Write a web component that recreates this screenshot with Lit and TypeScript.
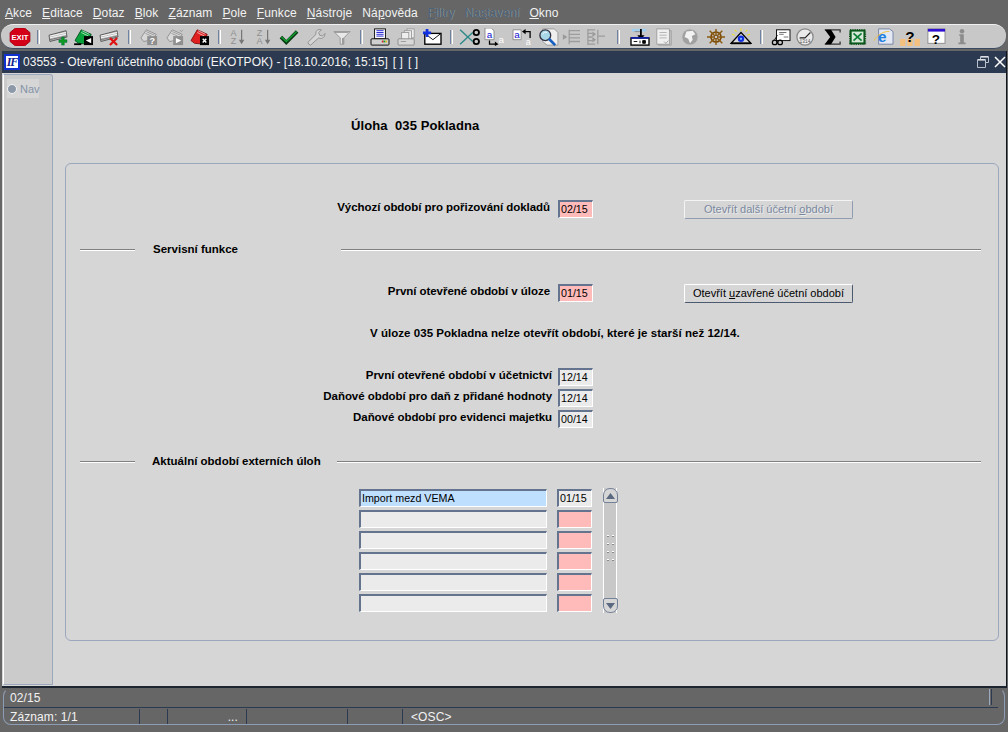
import { LitElement, html, css, svg } from "lit";
import { customElement } from "lit/decorators.js";

const stack = svg`<polygon points="2,8 21,3 22,10 3,15" fill="#b8b8b8" stroke="#555"/><path d="M3 9 21 5M3 11 21 7" stroke="#fff" fill="none"/><path d="M3 13 21 9" stroke="#777" fill="none"/>`;
const card = (c: string, d: string) => svg`<polygon points="2,14 9,2 20,7 16,18 6,17" fill="${c}" stroke="${d}"/><path d="M10 3 18 7M9 5 17 9" stroke="#fff" opacity=".7"/>`;
const gcard = svg`<polygon points="3,11 9,2 20,7 16,13 6,15" fill="#d8d8d8" stroke="#8c8c8c"/><path d="M9 4 18 8M8 6 15 9" stroke="#999"/>`;
const blackBox = (s: unknown) => svg`<rect x="12" y="9" width="10" height="10" fill="#000"/>${s}`;
const grayBox = (s: unknown) => svg`<rect x="10" y="9" width="11" height="10" fill="#8f8f8f"/>${s}`;
const fam = "Liberation Sans";

type Ic = { c: number; g?: unknown };
const items: Ic[] = [
  { c: 20, g: svg`<polygon points="7,0 17,0 23,5 23,15 17,20 7,20 1,15 1,5" fill="#d40018" stroke="#a00010"/><text x="12" y="13.5" text-anchor="middle" font-family="${fam}" font-weight="700" font-size="8.5" fill="#fff">EXIT</text>` },
  { c: 38.5 },
  { c: 58, g: svg`${stack}<path d="M16 10h3v3h3v3h-3v3h-3v-3h-3v-3h3z" fill="#0f9a22" stroke="#064" stroke-width=".5"/>` },
  { c: 84, g: svg`${card("#08a038", "#045020")}${blackBox(svg`<polygon points="14,14 20,11 20,17" fill="#fff"/>`)}<path d="M1 18h8" stroke="#000" stroke-width="2"/>` },
  { c: 109, g: svg`${stack}<path d="M13 11 21 19M21 11 13 19" stroke="#e01010" stroke-width="2.4"/>` },
  { c: 129 },
  { c: 149, g: svg`${gcard}${grayBox(svg`<text x="15.5" y="18" text-anchor="middle" font-family="${fam}" font-weight="700" font-size="10" fill="#fff">?</text>`)}` },
  { c: 175, g: svg`${gcard}${grayBox(svg`<polygon points="13,11 19,14 13,17" fill="#fff"/>`)}<path d="M17 2l2 2 2-2" stroke="#999" fill="none"/>` },
  { c: 200, g: svg`${card("#e02020", "#801010")}${blackBox(svg`<path d="M15 12 19 16M19 12 15 16" stroke="#fff" stroke-width="1.6"/>`)}` },
  { c: 219 },
  { c: 238, g: svg`<text x="7" y="9" text-anchor="middle" font-family="${fam}" font-size="10" fill="#8f8f8f">A</text><text x="7" y="18" text-anchor="middle" font-family="${fam}" font-size="10" fill="#8f8f8f">Z</text><path d="M16 2v14" stroke="#777" stroke-width="1.4"/><polygon points="13,13 19,13 16,18" fill="#777"/>` },
  { c: 264, g: svg`<text x="7" y="9" text-anchor="middle" font-family="${fam}" font-size="10" fill="#8f8f8f">Z</text><text x="7" y="18" text-anchor="middle" font-family="${fam}" font-size="10" fill="#8f8f8f">A</text><path d="M16 2v14" stroke="#777" stroke-width="1.4"/><polygon points="13,13 19,13 16,18" fill="#777"/>` },
  { c: 289, g: svg`<path d="M3 10 9 16 21 4" fill="none" stroke="#0a3a14" stroke-width="4"/><path d="M3.5 10 9 15 20.5 4" fill="none" stroke="#12a030" stroke-width="1.6"/>` },
  { c: 316, g: svg`<path d="M4 18 3 16 12 7C11 3 14 1 18 2L15 5 16 8 19 9 22 6C22 10 19 13 15 11L6 19Z" fill="#d6d6d6" stroke="#8c8c8c"/>` },
  { c: 342, g: svg`<polygon points="3,4 21,4 14,11 14,18 10,18 10,11" fill="#e8e8e8" stroke="#909090"/><path d="M4 5h15" stroke="#9a9a9a"/><path d="M13 11v7" stroke="#9a9a9a" stroke-width="2"/>` },
  { c: 361 },
  { c: 380, g: svg`<rect x="6" y="1" width="12" height="11" fill="#fff" stroke="#000"/><path d="M8 3h8M8 5h8M8 7h8M8 9h8" stroke="#1818d0"/><rect x="2" y="12" width="20" height="7" rx="1" fill="#d0d0d0" stroke="#000"/><path d="M14 15h2" stroke="#e02020" stroke-width="2"/><path d="M16 15h2" stroke="#10a030" stroke-width="2"/><path d="M18 15h2" stroke="#e0c020" stroke-width="2"/>` },
  { c: 407, g: svg`<rect x="12" y="1" width="8" height="10" fill="#eee" stroke="#999"/><rect x="9" y="3" width="8" height="10" fill="#eee" stroke="#999"/><rect x="6" y="5" width="8" height="8" fill="#eee" stroke="#999"/><rect x="2" y="12" width="18" height="7" rx="1" fill="#d8d8d8" stroke="#8a8a8a"/><path d="M5 15h6" stroke="#999"/>` },
  { c: 432, g: svg`<rect x="4" y="6" width="18" height="12" fill="#fff" stroke="#000" stroke-width="1.5"/><path d="M4 6 13 13 22 6" fill="none" stroke="#000"/><path d="M2 4h3V1h3v3h3v3H8v3H5V7H2z" fill="#1030e0"/>` },
  { c: 451 },
  { c: 470, g: svg`<path d="M1 2 15 15" stroke="#2e8a8a" stroke-width="1.6"/><path d="M1 18 15 5" stroke="#2e8a8a" stroke-width="1.6"/><circle cx="19" cy="5" r="3" fill="none" stroke="#000" stroke-width="2"/><circle cx="19" cy="15" r="3" fill="none" stroke="#000" stroke-width="2"/>` },
  { c: 494, g: svg`<polygon points="2,0 9,0 12,3 12,13 2,13" fill="#fff" stroke="#888"/><text x="7" y="11" text-anchor="middle" font-family="${fam}" font-size="11" fill="#1010d0">a</text><path d="M7 14v4h7" fill="none" stroke="#000" stroke-width="1.4"/><polygon points="13,15 17,18 13,20" fill="#000"/><text x="20" y="17" text-anchor="middle" font-family="${fam}" font-size="11" fill="#fff">a</text>` },
  { c: 522, g: svg`<polygon points="2,2 11,2 11,13 2,13" fill="#fff" stroke="#888"/><text x="6.5" y="11" text-anchor="middle" font-family="${fam}" font-size="11" fill="#1010d0">a</text><path d="M21 11V4h-6" fill="none" stroke="#000" stroke-width="1.4"/><polygon points="16,1 12,4 16,7" fill="#000"/><text x="19" y="19" text-anchor="middle" font-family="${fam}" font-size="10" fill="#fff">a</text>` },
  { c: 548, g: svg`<polygon points="6,1 19,1 23,5 23,19 11,19 6,15" fill="#efefef" stroke="#999"/><circle cx="9" cy="8" r="6" fill="#a8d8e8" stroke="#334" stroke-width="1.5"/><path d="M6 7C7 5 9 4 11 5" stroke="#fff" fill="none"/><path d="M13 12 20 19" stroke="#1860c0" stroke-width="3"/>` },
  { c: 571, g: svg`<polygon points="3,7 8,10 3,13" fill="#999"/><path d="M10 2v16M10 3h12M10 7h12M10 11h12M10 15h12" stroke="#9c9c9c" stroke-width="1.4"/>` },
  { c: 596, g: svg`<path d="M3 1v18M3 2h8M3 6h5M3 10h5M3 14h5M3 18h8" stroke="#9c9c9c" stroke-width="1.4"/><polygon points="8,4 12,7 8,10" fill="#999"/><polygon points="8,10 12,13 8,16" fill="#999"/><path d="M14 2v16M14 9h8" stroke="#9c9c9c" stroke-width="1.4"/>` },
  { c: 618.5 },
  { c: 640, g: svg`<rect x="3" y="1" width="16" height="3" fill="#a0d0f0"/><path d="M6 4h6" stroke="#888"/><path d="M13 1v9" stroke="#000" stroke-width="2"/><polygon points="9,8 17,8 13,13" fill="#000"/><rect x="2" y="11" width="20" height="8" fill="#fff" stroke="#000" stroke-width="1.5"/><rect x="2" y="10" width="20" height="2" fill="#1020a0"/><path d="M5 15h4M12 14v3M15 14h3v3h-3z" stroke="#000"/>` },
  { c: 664, g: svg`<rect x="4" y="1" width="14" height="17" fill="#efefef" stroke="#9c9c9c"/><path d="M18 3h2v16H6v-1" stroke="#9c9c9c" fill="none"/><path d="M7 5h8M7 8h8M7 11h8" stroke="#b0b0b0"/><path d="M12 15l2 2 3-3" stroke="#999" fill="none"/>` },
  { c: 690, g: svg`<circle cx="12" cy="10" r="9" fill="#a0a0a0" stroke="#c4c4c4"/><path d="M8 4 15 3 18 7 14 9 15 13 12 17 10 12 6 10Z" fill="#f2f2f2"/>` },
  { c: 716, g: svg`<circle cx="12" cy="10" r="5.5" fill="none" stroke="#7a4a08" stroke-width="2"/><path d="M12 1v18M2 10h20M5 3l14 14M19 3 5 17" stroke="#8a5a10" stroke-width="1.6"/><circle cx="12" cy="10" r="2" fill="#c8c8c8" stroke="#7a4a08"/>` },
  { c: 741, g: svg`<path d="M12 0v3M5 2l2 2M19 2l-2 2M2 7l3 1M22 7l-3 1" stroke="#f0e020" stroke-width="1.2"/><polygon points="12,5 23,17 1,17" fill="#d8d8d8" stroke="#000" stroke-width="1.4"/><path d="M1 17h22" stroke="#000" stroke-width="2"/><circle cx="12" cy="12" r="3.6" fill="#1030e0"/><circle cx="12" cy="12" r="1.2" fill="#80c0ff"/>` },
  { c: 761 },
  { c: 781, g: svg`<rect x="7" y="2" width="15" height="12" fill="#fff" stroke="#000"/><path d="M10 5h8M10 7h5M15 10h5" stroke="#666"/><circle cx="5" cy="16" r="2.6" fill="none" stroke="#000" stroke-width="1.4"/><circle cx="11" cy="16" r="2.6" fill="none" stroke="#000" stroke-width="1.4"/><path d="M7 16h2M5 13l3-5" stroke="#000"/>` },
  { c: 805, g: svg`<circle cx="12" cy="10" r="9" fill="#eaeaea" stroke="#888" stroke-width="1.4"/><path d="M6 11H12L18 5" stroke="#222" stroke-width="1.2" fill="none"/><text x="12" y="16.5" text-anchor="middle" font-family="Liberation Mono" font-size="5" fill="#555">1314</text>` },
  { c: 832, g: svg`<path d="M4 2H21V5M4 18H21V15" fill="none" stroke="#333" stroke-width="1.4"/><polygon points="4,2 11,2 16,10 11,18 4,18 10,10" fill="#000"/>` },
  { c: 857.5, g: svg`<rect x="3" y="2" width="17" height="16" fill="#0c6020" stroke="#0a4a18" stroke-dasharray="1 1" stroke-width="2"/><rect x="5" y="4" width="13" height="12" fill="#d8e8d8"/><path d="M7 6 16 14M16 6 7 14" stroke="#108038" stroke-width="2"/>` },
  { c: 884, g: svg`<polygon points="6,1 18,1 22,4 22,18 6,18" fill="#e4e8f4" stroke="#7080a0"/><text x="10" y="15" text-anchor="middle" font-family="${fam}" font-weight="700" font-size="17" fill="#2080e0">e</text><path d="M1 14C4 7 14 3 18 4" stroke="#f0c030" fill="none"/>` },
  { c: 910, g: svg`<rect x="1" y="12" width="6" height="8" fill="#f4c080"/><rect x="17" y="12" width="6" height="8" fill="#f4c080"/><rect x="9" y="12" width="6" height="8" fill="#f4c080"/><text x="12" y="15" text-anchor="middle" font-family="${fam}" font-weight="700" font-size="17" fill="#000">?</text>` },
  { c: 936, g: svg`<rect x="3" y="1" width="19" height="16" fill="#fff" stroke="#888"/><rect x="3" y="1" width="19" height="3" fill="#3010d0"/><text x="12" y="18" text-anchor="middle" font-family="${fam}" font-weight="700" font-size="15" fill="#000">?</text>` },
  { c: 962, g: svg`<circle cx="12" cy="3.5" r="2.5" fill="#8c8c8c"/><path d="M9 7h5v9h2v2H8v-2h2V9H9z" fill="#8c8c8c"/>` },
];

const menus: [string, string, string, boolean?][] = [
  ["", "A", "kce"], ["", "E", "ditace"], ["", "D", "otaz"], ["", "B", "lok"], ["", "Z", "áznam"], ["", "P", "ole"],
  ["", "F", "unkce"], ["", "N", "ástroje"], ["Ná", "p", "ověda"], ["", "F", "iltry", true], ["Na", "s", "tavení", true], ["", "O", "kno"],
];

@customElement("app-root")
export class AppRoot extends LitElement {
  static styles = css`
    :host { display: flex; flex-direction: column; width: 1008px; height: 732px; background: #666; overflow: hidden;
      font: 12px "Liberation Sans", Arial, sans-serif; color: #000; }
    .menu { height: 24px; display: flex; align-items: center; gap: 10px; padding: 2px 0 0 5px; box-sizing: border-box; color: #f2f2f2; flex: none; letter-spacing: .1px; }
    .menu .off { color: #4f6376; text-shadow: 1px 0 0 #858f95; }
    .menu u { text-underline-offset: 1px; }
    .toolbar { height: 25px; flex: none; box-sizing: border-box; margin: 0 2px 0 1px; background: #c8c8c8; border-top: 1px solid #f0f0f0; border-bottom: 1px solid #3a4a60; border-radius: 12px; display: flex; align-items: center; }
    .toolbar svg { flex: none; display: block; }
    .sep { flex: none; width: 3px; height: 14px; box-sizing: border-box; border-left: 1px solid #6f82a4; border-right: 1px solid #fff; }
    .window { margin: 2px 1px 0 2px; height: 637px; flex: none; display: flex; flex-direction: column; background: #d6d6d6; border-bottom: 2px solid #1c2430; border-right: 1px solid #10161f; box-sizing: border-box; }
    .title { height: 22px; flex: none; background: #2b3a50; color: #f4f4f4; display: flex; align-items: center; padding: 0 0 0 2px; letter-spacing: .03px; gap: 3px; white-space: pre; }
    .title .t { margin-left: 5px; }
    .logo { width: 16px; height: 16px; background: #fff; box-sizing: border-box; border: 2px solid #1030d0; color: #102090; display: flex; align-items: center; justify-content: center; font: italic 700 12px "Liberation Serif", serif; letter-spacing: -1px; flex: none; }
    .title .grow { flex: 1; }
    .wbtns { display: flex; gap: 5px; }
    .body { flex: 1; display: flex; min-height: 0; }
    .nav { width: 50px; flex: none; box-sizing: border-box; margin: 1px 0 1px 1px; background: #cbcbcb; border: 1px solid #9aa7bd; border-left-color: #fff; border-top-right-radius: 3px; padding: 4px 0 0 3px; }
    .navtab { display: flex; align-items: center; gap: 3px; height: 19px; width: 32px; background: #d6d6d6; color: #8593a8; font-size: 11px; }
    .radio { width: 10px; height: 10px; border-radius: 50%; background: #8d98a8; border: 1px solid #f4f4f4; box-sizing: border-box; flex: none; }
    .content { flex: 1; padding: 0 0 0 12px; min-width: 0; }
    .heading { font-weight: 700; font-size: 13px; height: 90px; padding: 45px 0 0 286px; box-sizing: border-box; white-space: pre; letter-spacing: .1px; }
    .panel { width: 934px; height: 478px; box-sizing: border-box; border: 1px solid #9aa7bd; border-radius: 6px; display: flex; flex-direction: column; }
    .row { display: grid; grid-template-columns: 486px 35px 79px 169px; column-gap: 6px; height: 18px; align-items: center; flex: none; }
    .row > :nth-child(3) { grid-column: 4; }
    .lbl { font-weight: 700; font-size: 11.5px; text-align: right; white-space: nowrap; letter-spacing: -.05px; margin-top: -5px; }
    .lbl.in { padding-right: 2px; }
    .r1 { margin-top: 35px; } .r2 { margin-top: 25px; } .r4 { margin-top: 26px; } .r5 { margin-top: 3px; }
    .note { font-weight: 700; font-size: 11.5px; margin-top: 23px; height: 18px; padding-left: 304px; letter-spacing: .04px; line-height: 18px; flex: none; }
    .fld { box-sizing: border-box; height: 18px; border: 1px solid; border-width: 2px 1px 1px 2px; border-color: #64748f #fff #fff #64748f; background: #ebebeb; font-size: 10.7px; line-height: 15px; padding-left: 1px; white-space: nowrap; overflow: hidden; }
    .pink { background: #ffbaba; }
    .blue { background: #bfdfff; }
    .btn { box-sizing: border-box; height: 19px; background: #d6d6d6; border: 1px solid; border-color: #fff #4c5a70 #4c5a70 #fff; border-radius: 2px; text-align: center; font-size: 11px; line-height: 17px; white-space: nowrap; margin-top: 1px; }
    .btn.dis { color: #7a889f; text-shadow: 1px 1px 0 #ececec; border-color: #f4f4f4 #8f9cb2 #8f9cb2 #f4f4f4; }
    .divider { display: grid; align-items: center; height: 16px; padding: 0 17px 0 14px; font-weight: 700; font-size: 11.5px; flex: none; letter-spacing: 0; }
    .divider i { height: 2px; background: linear-gradient(#808080 50%, #fff 50%); display: block; }
    .divider span { white-space: nowrap; margin-top: -2px; }
    .d1 { margin-top: 25px; grid-template-columns: 55px 206px 1fr; }
    .d1 span { padding-left: 18px; }
    .d2 { margin-top: 26px; grid-template-columns: 55px 202px 1fr; }
    .d2 span { padding-left: 17px; }
    .table { margin-top: 19px; display: grid; grid-template-columns: 188px 35px 15px; column-gap: 10px; padding-left: 293px; grid-auto-rows: 18px; row-gap: 3px; }
    .table .fld { line-height: 15px; }
    .scroll { grid-column: 3; grid-row: 1 / span 6; height: 125px; margin: -1px 0 0 1px; box-sizing: border-box; border-left: 1px solid #fff; border-right: 1px solid #fff; background: #c8c8c8; display: flex; flex-direction: column; justify-content: space-between; align-items: center; }
    .sbtn { width: 15px; height: 15px; box-sizing: border-box; margin: 0 -1px; background: #d6d6d6; border: 1px solid #748299; display: flex; align-items: center; justify-content: center; flex: none; }
    .sbtn.up { border-radius: 7px 7px 2px 2px; }
    .sbtn.dn { border-radius: 2px 2px 7px 7px; }
    .grip { display: grid; grid-template-columns: 2px 2px; gap: 6px 3px; margin-top: -5px; }
    .grip b { width: 2px; height: 1px; background: #fff; border-bottom: 1px solid #8a8a8a; box-sizing: content-box; }
    .status { flex: none; margin: 0 3px 0 3px; height: 37px; box-sizing: border-box; border: 1px solid #8f9db4; border-top-color: #666; border-radius: 8px; color: #f2f2f2; display: flex; flex-direction: column; font-size: 12px; letter-spacing: .1px; }
    .st1 { height: 19px; box-sizing: border-box; margin-right: 6px; border-bottom: 1px solid #2b3a50; padding-left: 6px; line-height: 18px; display: flex; justify-content: space-between; flex: none; }
    .st1 i { width: 3px; height: 16px; margin-right: 6px; border-left: 1px solid #9aa7bd; border-right: 1px solid #2b3a50; box-sizing: border-box; }
    .st2 { flex: 1; display: grid; grid-template-columns: 136px 28px 79px 101px 55px 1fr; }
    .st2 > div { height: 15px; margin-top: 1px; box-sizing: border-box; border-right: 1px solid #2b3a50; line-height: 17px; padding-left: 6px; white-space: nowrap; }
    .st2 > div:last-child { border-right: 0; padding-left: 8px; }
    .st2 .dots { text-align: right; padding-right: 8px; }
  `;

  private renderToolbar() {
    let right = 0;
    return items.map((it) => {
      const w = it.g ? 22 : 3;
      const ml = it.c - w / 2 - right - 1;
      right = it.c - 1 + w / 2;
      return it.g
        ? html`<svg width="22" height="18" viewBox="0 0 24 20" style="margin-left:${ml}px">${it.g}</svg>`
        : html`<span class="sep" style="margin-left:${ml}px"></span>`;
    });
  }

  render() {
    return html`
      <div class="menu">
        ${menus.map(([a, u, b, off]) => html`<span class=${off ? "off" : ""}>${a}<u>${u}</u>${b}</span>`)}
      </div>
      <div class="toolbar">${this.renderToolbar()}</div>
      <div class="window">
        <div class="title">
          <span class="logo">IF</span>
          <span>03553 - Otevření účetního období (EKOTPOK) - [18.10.2016; 15:15]<span class="t">[ ]</span><span class="t">[ ]</span></span>
          <span class="grow"></span>
          <span class="wbtns">
            <svg width="12" height="12" viewBox="0 0 12 12"><path d="M3.5 3.5V.5h8v6h-3" fill="none" stroke="#b8c0cc"/><path d="M.5 3.5h8v8h-8z" fill="none" stroke="#b8c0cc"/><path d="M1 4h7M4 1h7" stroke="#fff"/></svg>
            <svg width="12" height="12" viewBox="0 0 12 12"><path d="M1 1 11 11M11 1 1 11" stroke="#fff" stroke-width="1.5"/></svg>
          </span>
        </div>
        <div class="body">
          <div class="nav"><div class="navtab"><span class="radio"></span>Nav</div></div>
          <div class="content">
            <div class="heading">Úloha  035 Pokladna</div>
            <div class="panel">
              <div class="row r1">
                <div class="lbl in">Výchozí období pro pořizování dokladů</div>
                <div class="fld pink">02/15</div>
                <div class="btn dis">Otevřít další účetní <u>o</u>bdobí</div>
              </div>
              <div class="divider d1"><i></i><span>Servisní funkce</span><i></i></div>
              <div class="row r2">
                <div class="lbl in">První otevřené období v úloze</div>
                <div class="fld pink">01/15</div>
                <div class="btn">Otevřít <u>u</u>zavřené účetní období</div>
              </div>
              <div class="note">V úloze 035 Pokladna nelze otevřít období, které je starší než 12/14.</div>
              <div class="row r4"><div class="lbl">První otevřené období v účetnictví</div><div class="fld">12/14</div></div>
              <div class="row r5"><div class="lbl">Daňové období pro daň z přidané hodnoty</div><div class="fld">12/14</div></div>
              <div class="row r5"><div class="lbl">Daňové období pro evidenci majetku</div><div class="fld">00/14</div></div>
              <div class="divider d2"><i></i><span>Aktuální období externích úloh</span><i></i></div>
              <div class="table">
                <div class="fld blue">Import mezd VEMA</div><div class="fld">01/15</div>
                <div class="scroll">
                  <div class="sbtn up"><svg width="9" height="6" viewBox="0 0 9 6"><polygon points="4.5,0 9,6 0,6" fill="#5a6880"/></svg></div>
                  <div class="grip">${Array.from({ length: 8 }, () => html`<b></b>`)}</div>
                  <div class="sbtn dn"><svg width="9" height="6" viewBox="0 0 9 6"><polygon points="0,0 9,0 4.5,6" fill="#5a6880"/></svg></div>
                </div>
                ${Array.from({ length: 5 }, () => html`<div class="fld"></div><div class="fld pink"></div>`)}
              </div>
            </div>
          </div>
        </div>
      </div>
      <div class="status">
        <div class="st1"><span>02/15</span><i></i></div>
        <div class="st2">
          <div>Záznam: 1/1</div><div></div><div class="dots">...</div><div></div><div></div><div>&lt;OSC&gt;</div>
        </div>
      </div>
    `;
  }
}
